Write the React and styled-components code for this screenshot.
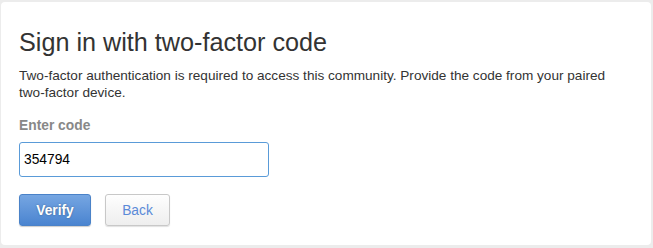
import React, { useState } from 'react'
import styled, { createGlobalStyle } from 'styled-components'

const GlobalStyle = createGlobalStyle`
  html, body {
    margin: 0;
    padding: 0;
    background: #ececec;
  }
  body {
    font-family: "Liberation Sans", Arial, sans-serif;
  }
`

const Card = styled.div`
  box-sizing: border-box;
  margin: 2px 2px 0 1px;
  width: 650px;
  height: 243px;
  background: #fff;
  border-radius: 4px;
  padding: 25px 18px 0 18px;
`

const Title = styled.h1`
  margin: 0;
  font-size: 25.2px;
  font-weight: normal;
  line-height: 30px;
  color: #333;
`

const Intro = styled.p`
  margin: 10px 0 0;
  font-size: 13.6px;
  line-height: 17px;
  color: #333;
`

const Label = styled.label`
  display: block;
  margin-top: 16px;
  font-size: 13.8px;
  font-weight: bold;
  color: #888;
  line-height: 17px;
`

const Input = styled.input`
  box-sizing: border-box;
  display: block;
  margin-top: 8px;
  width: 250px;
  height: 35px;
  padding: 0 4px;
  border: 1px solid #5a9bd8;
  border-radius: 3px;
  font-family: "Liberation Sans", Arial, sans-serif;
  font-size: 13.8px;
  color: #000;
  outline: none;
`

const Actions = styled.div`
  display: flex;
  gap: 14px;
  margin-top: 17px;
`

const Button = styled.button`
  box-sizing: border-box;
  height: 32px;
  padding: 0;
  width: ${p => p.$w}px;
  border-radius: 3px;
  font-family: "Liberation Sans", Arial, sans-serif;
  font-size: 13.8px;
  cursor: pointer;
  ${p => p.$primary ? `
    border: 1px solid #4a82c8;
    background: linear-gradient(#76a6e2, #4a84d0);
    color: #fff;
    font-weight: bold;
    text-shadow: 0 0 2px rgba(0,0,0,0.35);
    box-shadow: 0 1px 1px rgba(0,0,0,0.2);
  ` : `
    border: 1px solid #c8c8c8;
    background: linear-gradient(#fefefe, #eeeeee);
    color: #5b8ad8;
    box-shadow: 0 1px 1px rgba(0,0,0,0.12);
  `}
`

const App = () => {
  const [code, setCode] = useState('354794')

  return (
    <>
      <GlobalStyle />
      <Card>
        <Title>Sign in with two-factor code</Title>
        <Intro>
          Two-factor authentication is required to access this community. Provide the code from your paired two-factor device.
        </Intro>
        <Label htmlFor="code">Enter code</Label>
        <Input id="code" value={code} onChange={e => setCode(e.target.value)} autoFocus />
        <Actions>
          <Button $primary $w={72}>Verify</Button>
          <Button $w={65}>Back</Button>
        </Actions>
      </Card>
    </>
  )
}

export default App
